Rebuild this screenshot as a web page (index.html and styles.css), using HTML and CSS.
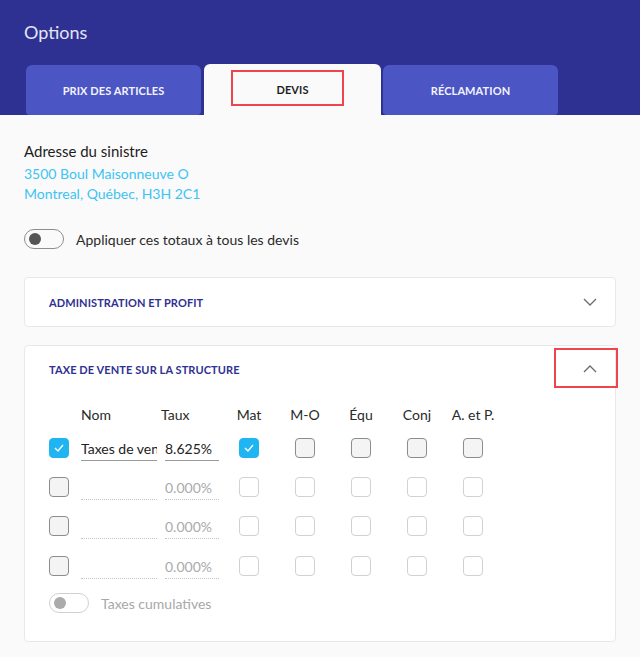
FILE: index.html
```html
<!DOCTYPE html>
<html lang="fr">
<head>
<meta charset="utf-8">
<title>Options</title>
<link rel="stylesheet" href="styles.css">
</head>
<body>
<header class="top">
  <h1 class="title">Options</h1>
  <nav class="tabs">
    <div class="tab">PRIX DES ARTICLES</div>
    <div class="tab active">DEVIS<span class="mark mark-tab"></span></div>
    <div class="tab">RÉCLAMATION</div>
  </nav>
</header>
<main class="content">
  <div class="label">Adresse du sinistre</div>
  <div class="addr">3500 Boul Maisonneuve O<br>Montreal, Québec, H3H 2C1</div>
  <div class="toggle-row">
    <span class="toggle"><span class="knob"></span></span>
    <span class="toggle-label">Appliquer ces totaux à tous les devis</span>
  </div>

  <section class="card">
    <div class="card-head">
      <span class="card-title">ADMINISTRATION ET PROFIT</span>
      <svg class="chev" width="14" height="8" viewBox="0 0 14 8"><polyline points="1,1 7,7 13,1" fill="none" stroke="#6b6b6b" stroke-width="1.3"/></svg>
    </div>
  </section>

  <section class="card card-open">
    <div class="card-head">
      <span class="card-title">TAXE DE VENTE SUR LA STRUCTURE</span>
      <svg class="chev" width="14" height="8" viewBox="0 0 14 8"><polyline points="1,7 7,1 13,7" fill="none" stroke="#6b6b6b" stroke-width="1.3"/></svg>
      <span class="mark mark-chev"></span>
    </div>
    <div class="grid">
      <span></span><span class="th th-left">Nom</span><span class="th th-left">Taux</span>
      <span class="th">Mat</span><span class="th">M-O</span><span class="th">Équ</span><span class="th">Conj</span><span class="th">A. et P.</span>

      <span class="cb checked"><svg width="12" height="10" viewBox="0 0 12 10"><polyline points="2,5 5,8 10,2" fill="none" stroke="#fff" stroke-width="1.4"/></svg></span>
      <input class="inp name" type="text" value="Taxes de vente" readonly>
      <input class="inp rate" type="text" value="8.625%" readonly>
      <span class="cell"><span class="cb checked"><svg width="12" height="10" viewBox="0 0 12 10"><polyline points="2,5 5,8 10,2" fill="none" stroke="#fff" stroke-width="1.4"/></svg></span></span>
      <span class="cell"><span class="cb"></span></span>
      <span class="cell"><span class="cb"></span></span>
      <span class="cell"><span class="cb"></span></span>
      <span class="cell"><span class="cb"></span></span>

      <span class="cb"></span>
      <input class="inp name empty" type="text" value="" readonly>
      <input class="inp rate empty" type="text" placeholder="0.000%" readonly>
      <span class="cell"><span class="cb dis"></span></span>
      <span class="cell"><span class="cb dis"></span></span>
      <span class="cell"><span class="cb dis"></span></span>
      <span class="cell"><span class="cb dis"></span></span>
      <span class="cell"><span class="cb dis"></span></span>

      <span class="cb"></span>
      <input class="inp name empty" type="text" value="" readonly>
      <input class="inp rate empty" type="text" placeholder="0.000%" readonly>
      <span class="cell"><span class="cb dis"></span></span>
      <span class="cell"><span class="cb dis"></span></span>
      <span class="cell"><span class="cb dis"></span></span>
      <span class="cell"><span class="cb dis"></span></span>
      <span class="cell"><span class="cb dis"></span></span>

      <span class="cb"></span>
      <input class="inp name empty" type="text" value="" readonly>
      <input class="inp rate empty" type="text" placeholder="0.000%" readonly>
      <span class="cell"><span class="cb dis"></span></span>
      <span class="cell"><span class="cb dis"></span></span>
      <span class="cell"><span class="cb dis"></span></span>
      <span class="cell"><span class="cb dis"></span></span>
      <span class="cell"><span class="cb dis"></span></span>
    </div>
    <div class="toggle-row cumul">
      <span class="toggle dis"><span class="knob"></span></span>
      <span class="toggle-label dis">Taxes cumulatives</span>
    </div>
  </section>
</main>
</body>
</html>
```

FILE: styles.css
```css
* { box-sizing: border-box; }
html, body { margin: 0; padding: 0; }
body {
  background: #fafafa;
  font-family: "Segoe UI", Lato, "Noto Sans", sans-serif;
  color: #222;
  width: 640px;
  overflow: hidden;
}
.top {
  background: #2e3192;
  height: 115px;
  padding: 21px 0 0 24px;
  display: flex;
  flex-direction: column;
}
.title {
  margin: 0;
  font-size: 18px;
  font-weight: 400;
  color: #e4e5f4;
  line-height: 22px;
}
.tabs {
  display: flex;
  gap: 2px;
  margin: 21px 0 0 2px;
  align-items: flex-end;
  flex: 1;
}
.tab {
  position: relative;
  width: 175px;
  height: 50px;
  background: #4b55c3;
  border-radius: 6px 6px 4px 4px;
  color: #f2f3fb;
  font-size: 11px;
  font-weight: 700;
  display: flex;
  align-items: center;
  justify-content: center;
  letter-spacing: 0.1px;
}
.tab.active {
  width: 177px;
  height: 51px;
  background: #fafafa;
  color: #1e1e1e;
  border-radius: 6px 6px 0 0;
  margin-left: 1px;
}
.mark {
  position: absolute;
  border: 2px solid #f0434a;
}
.mark-tab { left: 27px; top: 6px; width: 113px; height: 36px; }

.content {
  padding: 26px 24px 0 24px;
}
.label {
  font-size: 15px;
  line-height: 20px;
  color: #1d1d1d;
}
.addr {
  margin-top: 3px;
  font-size: 14px;
  line-height: 20px;
  color: #3cc4f2;
}
.toggle-row {
  display: flex;
  align-items: center;
  gap: 12px;
  margin-top: 25px;
}
.toggle {
  width: 40px;
  height: 20px;
  border: 1px solid #8e8e8e;
  border-radius: 10px;
  display: flex;
  align-items: center;
  padding-left: 4px;
  background: #fafafa;
}
.knob {
  width: 12px;
  height: 12px;
  border-radius: 50%;
  background: #555;
}
.toggle.dis { border-color: #d0d0d0; background: #fff; }
.toggle.dis .knob { background: #ababab; }
.toggle-label { font-size: 14px; color: #2a2a2a; }
.toggle-label.dis { color: #a8a8a8; }

.card {
  position: relative;
  background: #fff;
  border: 1px solid #e8e8e8;
  border-radius: 4px;
  margin-top: 28px;
}
.card-open { margin-top: 18px; padding-bottom: 28px; }
.card-head {
  position: relative;
  height: 48px;
  display: flex;
  align-items: center;
  justify-content: space-between;
  padding: 0 18px 0 24px;
}
.card-open .card-head { height: 46px; }
.card-title {
  font-size: 11px;
  font-weight: 700;
  color: #2e3192;
  letter-spacing: 0.1px;
}
.mark-chev { left: 529px; top: 2px; width: 64px; height: 40px; }

.grid {
  display: grid;
  grid-template-columns: 32px 80px 60px repeat(5, 56px);
  grid-template-rows: 28px repeat(4, 39.3px);
  align-items: center;
  padding-left: 24px;
  margin-top: 8px;
}
.th {
  font-size: 14px;
  color: #2a2a2a;
  text-align: center;
}
.th-left { text-align: left; }
.cell { display: flex; justify-content: center; }
.cb {
  width: 20px;
  height: 20px;
  border: 1.5px solid #8c8c8c;
  border-radius: 4px;
  background: #f4f4f4;
  display: flex;
  align-items: center;
  justify-content: center;
}
.cb.checked { background: #1fb5f2; border-color: #1fb5f2; }
.cb.dis { border: 1px solid #d2d2d2; background: #fff; }
.inp {
  font-family: inherit;
  font-size: 14px;
  line-height: 20px;
  height: 26px;
  padding: 2px 0 0 0;
  margin: 0;
  border: 0;
  border-bottom: 1px solid #9a9a9a;
  border-radius: 0;
  background: transparent;
  outline: none;
  color: #222;
}
.inp.name { width: 76px; }
.inp.rate { width: 54px; margin-left: 4px; }
.inp.empty { border-bottom: 1px dotted #c4c4c4; }
.inp.empty::placeholder { color: #aaa; opacity: 1; }
.cumul { margin: 8px 0 0 24px; }
```
